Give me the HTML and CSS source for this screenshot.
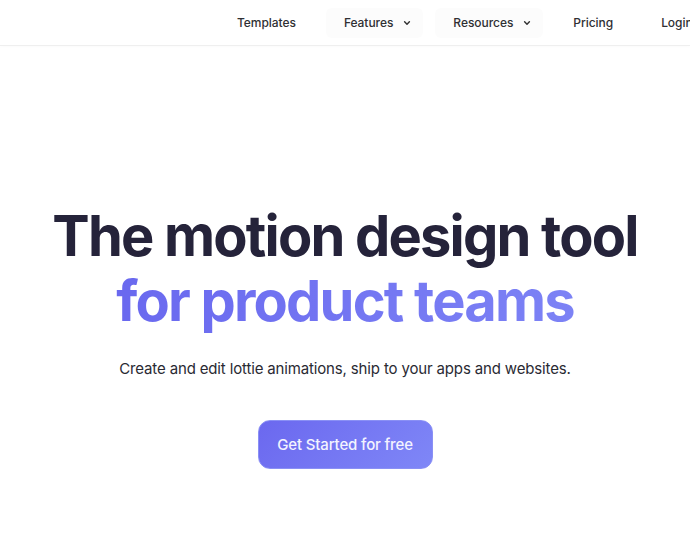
FILE: index.html
```html
<!DOCTYPE html>
<html lang="en">
<head>
<meta charset="utf-8">
<title>Motion design tool</title>
<link rel="stylesheet" href="styles.css">
</head>
<body>
<header class="topbar">
  <nav class="nav">
    <a class="nav-item" href="#">Templates</a>
    <a class="nav-item nav-drop" href="#">Features
      <svg class="chev" viewBox="0 0 10 10" width="8" height="8"><path d="M2 3.5 L5 6.5 L8 3.5" fill="none" stroke="#333" stroke-width="1.8" stroke-linecap="round" stroke-linejoin="round"/></svg>
    </a>
    <a class="nav-item nav-drop" href="#">Resources
      <svg class="chev" viewBox="0 0 10 10" width="8" height="8"><path d="M2 3.5 L5 6.5 L8 3.5" fill="none" stroke="#333" stroke-width="1.8" stroke-linecap="round" stroke-linejoin="round"/></svg>
    </a>
    <a class="nav-item" href="#">Pricing</a>
    <a class="nav-item" href="#">Login</a>
  </nav>
</header>
<main class="hero">
  <h1 class="title">
    <span class="title-line">The motion design tool</span>
    <span class="title-line accent">for product teams</span>
  </h1>
  <p class="subtitle">Create and edit lottie animations, ship to your apps and websites.</p>
  <a class="cta" href="#">Get Started for free</a>
</main>
</body>
</html>
```
FILE: styles.css
```css
html, body {
  margin: 0;
  padding: 0;
  background: #ffffff;
}
body {
  width: 690px;
  height: 550px;
  overflow: hidden;
  font-family: Inter, "Noto Sans", sans-serif;
}
.topbar {
  height: 45px;
  border-bottom: 1px solid #efefef;
  box-shadow: 0 1px 3px rgba(0,0,0,0.02);
  overflow: hidden;
}
.nav {
  display: flex;
  align-items: center;
  gap: 12px;
  height: 45px;
  padding-left: 219px;
  white-space: nowrap;
}
.nav-item {
  display: flex;
  align-items: center;
  gap: 10px;
  height: 30px;
  padding: 0 18px;
  font-size: 12px;
  font-weight: 500;
  letter-spacing: -0.05px;
  color: #2f2f33;
  text-decoration: none;
  border-radius: 6px;
  flex-shrink: 0;
}
.nav-drop {
  background: #fcfcfc;
  padding-right: 12px;
}
.chev {
  display: block;
}
.hero {
  display: flex;
  flex-direction: column;
  align-items: center;
  padding-top: 158px;
}
.title {
  margin: 0;
  font-size: 56px;
  line-height: 65px;
  font-weight: 700;
  letter-spacing: -1.8px;
  color: #25233a;
  text-align: center;
}
.title-line {
  display: block;
}
.accent {
  background: linear-gradient(90deg, #6765ee 0%, #7f86f6 100%);
  -webkit-background-clip: text;
  background-clip: text;
  color: transparent;
}
.subtitle {
  margin: 23px 0 0;
  font-size: 15px;
  line-height: 24px;
  letter-spacing: -0.15px;
  color: #2a2a33;
  font-weight: 400;
}
.cta {
  margin-top: 39px;
  display: flex;
  align-items: center;
  justify-content: center;
  width: 175px;
  height: 49px;
  box-sizing: border-box;
  border-radius: 12px;
  background: linear-gradient(135deg, #6b68ef 0%, #7f87f7 100%);
  border: 1px solid #8a90f5;
  color: #f3f3ff;
  font-size: 15px;
  letter-spacing: -0.15px;
  font-weight: 500;
  text-decoration: none;
}
```
